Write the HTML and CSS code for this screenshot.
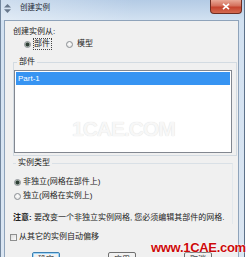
FILE: index.html
```html
<!DOCTYPE html>
<html lang="zh-CN">
<head>
<meta charset="utf-8">
<title>创建实例</title>
<link rel="stylesheet" href="styles.css">
</head>
<body>
<div class="window">
  <div class="titlebar">
    <svg class="app-icon" width="7" height="9" viewBox="0 0 7 9"><path d="M3.5 0 L7 3.6 L0 3.6 Z" fill="#68788c"/><path d="M0 5.2 L7 5.2 L3.5 9 Z" fill="#68788c"/></svg>
    <span class="title">创建实例</span>
    <div class="close"><svg width="8" height="7" viewBox="0 0 8 7"><path d="M1 0.8 L7 6.2 M7 0.8 L1 6.2" stroke="#fff" stroke-width="1.6"/></svg></div>
  </div>
  <div class="client">
    <div class="row">创建实例从:</div>
    <div class="row radio-row">
      <span class="radio checked"></span><span class="focus">部件</span>
      <span class="radio second"></span><span>模型</span>
    </div>
    <fieldset class="group parts">
      <legend>部件</legend>
      <div class="listbox">
        <div class="item selected">Part-1</div>
        <div class="list-wm">1CAE.COM</div>
      </div>
    </fieldset>
    <fieldset class="group type">
      <legend>实例类型</legend>
      <div class="row opt first"><span class="radio checked"></span>非独立(网格在部件上)</div>
      <div class="row opt"><span class="radio"></span>独立(网格在实例上)</div>
      <div class="row note"><b>注意:</b>&nbsp;要改变一个非独立实例网格,&nbsp;您必须编辑其部件的网格.</div>
    </fieldset>
    <div class="row check-row"><span class="checkbox"></span>从其它的实例自动偏移</div>
    <div class="buttons">
      <span class="btn default">确定</span>
      <span class="btn">应用</span>
      <span class="btn">取消</span>
    </div>
  </div>
</div>
<div class="site-wm">www.1CAE.com</div>
</body>
</html>
```
FILE: styles.css
```css
* { box-sizing: border-box; }
html, body { margin: 0; padding: 0; }
body {
  width: 249px;
  height: 257px;
  overflow: hidden;
  position: relative;
  background: #ffffff;
  font-family: "Liberation Sans", "Noto Sans CJK SC", sans-serif;
  font-size: 8px;
  color: #222;
}
.window {
  width: 245px;
  height: 257px;
  overflow: hidden;
  display: flex;
  flex-direction: column;
  background: linear-gradient(#b4cbe5, #d2e1f1 20px, #dbe6f2);
  border-left: 1px solid #72869e;
  border-right: 1px solid #5d7189;
}
.titlebar {
  height: 20px;
  flex: none;
  display: flex;
  align-items: flex-start;
  padding-left: 3px;
  background: linear-gradient(90deg, rgba(255,255,255,0.35), rgba(255,255,255,0) 55%);
}
.app-icon { margin-top: 4px; flex: none; }
.title {
  margin-left: 9px;
  line-height: 16px;
  font-size: 7.5px;
  color: #1c2733;
}
.close {
  margin-left: auto;
  margin-right: 2px;
  width: 32px;
  height: 14px;
  display: flex;
  align-items: center;
  justify-content: center;
  border: 1px solid #6e2d22;
  border-top: none;
  border-radius: 0 0 4px 4px;
  background: linear-gradient(#e9a897, #d4705c 45%, #c5432e 55%, #d46a50);
}
.client {
  flex: 1;
  min-height: 0;
  overflow: hidden;
  margin: 0 5px 0 3px;
  background: #f0f0f0;
  border: 1px solid #8fa3ba;
  border-bottom: none;
  padding: 5px 0 0 8px;
}
.row {
  height: 12px;
  line-height: 12px;
  display: flex;
  align-items: center;
  white-space: nowrap;
}
.radio {
  display: inline-block;
  flex: none;
  width: 7px;
  height: 7px;
  border-radius: 50%;
  border: 1px solid #8b8f94;
  background: radial-gradient(circle at 50% 40%, #ffffff, #dcdcdc);
  margin-right: 2px;
}
.radio.checked {
  background: radial-gradient(circle, #2f3f36 0 1.6px, #9fb0a3 2.2px, #e6ebe6 3px);
}
.radio-row { padding-left: 11px; }
.radio-row .second { margin-left: 14px; margin-right: 4px; }
.focus {
  border: 1px dotted #444;
  line-height: 10px;
  height: 12px;
  padding: 0 1px 0 0;
}
.group {
  margin: 0;
  padding: 0;
  min-width: 0;
}
.group legend {
  margin-left: 3px;
  padding: 0 2px;
  line-height: 12px;
  height: 12px;
}
.parts {
  margin-top: 6px;
  width: 224px;
  border: 1px solid #d3dbe2;
}
.listbox {
  position: relative;
  overflow: hidden;
  height: 83px;
  margin: 2px 4px 2px 0;
  border: 1px solid #828790;
  background: #ffffff;
  padding: 1px;
}
.item {
  height: 13px;
  line-height: 13px;
  padding-left: 2px;
  font-size: 8px;
}
.item.selected { background: #3794f2; color: #fff; }
.list-wm {
  position: absolute;
  left: 57px;
  top: 47px;
  font-size: 21px;
  line-height: 21px;
  font-weight: bold;
  letter-spacing: -1px;
  color: #f7f7f7;
  text-shadow: 0 0 1px #d6d6d6;
}
.type {
  margin-top: 1px;
  width: 220px;
  border: none;
  border-top: 1px solid #d9e0e6;
  border-right: 1px solid #e3e8ec;
}
.opt { padding-left: 1px; margin-top: 2px; }
.opt.first { margin-top: 7px; }
.note { margin-top: 10px; }
.note b { font-weight: bold; }
.check-row { margin-top: 7px; }
.checkbox {
  display: inline-block;
  width: 7px;
  height: 7px;
  margin-left: -3px;
  margin-right: 2px;
  border: 1px solid #8e8f8f;
  background: linear-gradient(135deg, #dcdcdc, #fbfbfb);
}
.buttons {
  margin-top: 9px;
  padding-left: 19px;
  display: flex;
  gap: 48px;
}
.btn {
  width: 28px;
  height: 18px;
  border: 1px solid #707070;
  border-radius: 2px;
  background: linear-gradient(#f3f3f3, #ebebeb 50%, #dddddd 51%, #cfcfcf);
  text-align: center;
  line-height: 14px;
}
.btn.default { border-color: #3c7fb1; box-shadow: inset 0 0 0 1px #9fd5f7; }
.site-wm {
  position: absolute;
  left: 151px;
  top: 241px;
  font-size: 13px;
  line-height: 13px;
  font-weight: bold;
  letter-spacing: -0.3px;
  color: #cc0a0a;
  text-shadow: 0 0 1px #fff, 0 0 2px #fff;
}
```
